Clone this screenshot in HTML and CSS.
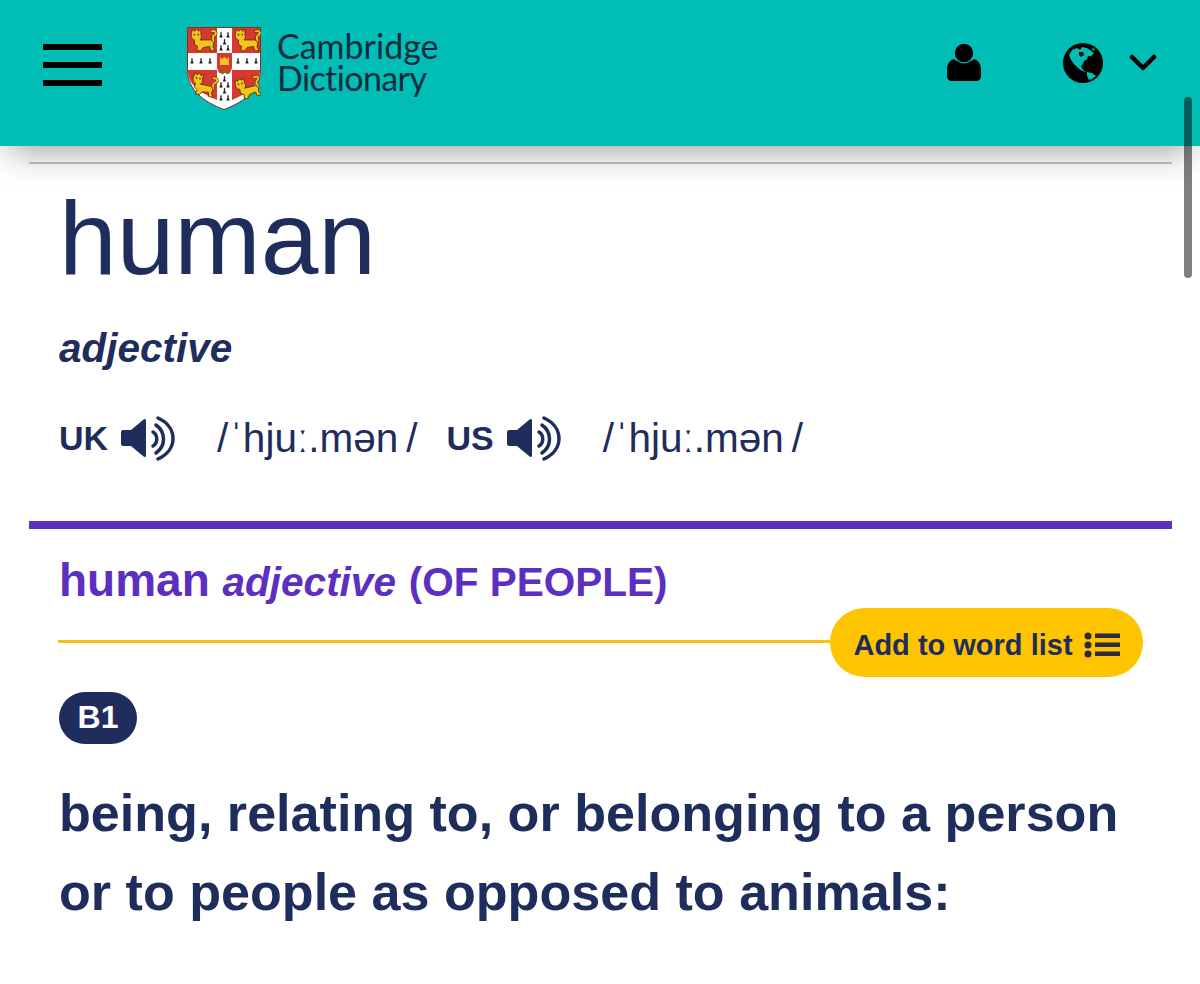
FILE: index.html
```html
<!DOCTYPE html>
<html lang="en">
<head>
  <meta charset="UTF-8">
  <title>human | Cambridge Dictionary</title>
  <link rel="stylesheet" href="styles.css">
</head>
<body>

<header class="topbar">
  <div class="hamburger"><span></span><span></span><span></span></div>

  <div class="logo">
    <svg class="shield" viewBox="0 0 74 83" width="74" height="83">
      <defs>
        <g id="lion">
          <path d="M22 4C26 3 27 6 24 8C21 10 25 12 23 15" fill="none" stroke="#5a3208" stroke-width="3" stroke-linecap="round"/>
          <path d="M22 4C26 3 27 6 24 8C21 10 25 12 23 15" fill="none" stroke="#f4c41c" stroke-width="1.800" stroke-linecap="round"/>
          <path d="M3 7L4 2L6 4L8 2L10 4L12 2L12 7C13 10 12 11 11 12L21 12C24 13 24 16 23 18L25 22L21 22L20 18L14 19L12 22L8 22L9 18L6 16L6 12C3 11 3 9 3 7Z" fill="#f4c41c" stroke="#5a3208" stroke-width=".8" stroke-linejoin="round"/>
          <circle cx="6" cy="7" r=".8" fill="#5a3208"/>
          <circle cx="9.500" cy="7" r=".8" fill="#5a3208"/>
        </g>
        <path id="erm" d="M0 -3.600L.9 -1.400L.4 -1L1.700 2.400H-1.700L-.4 -1L-.9 -1.400Z" fill="#22221f"/>
      </defs>
      <path d="M.5 .5H73.500V43C73.500 63 57 75 37 82.500C17 75 .5 63 .5 43Z" fill="#fff" stroke="#8f2a24" stroke-width="1"/>
      <path d="M1 1H30V26H1Z" fill="#d8392f"/>
      <path d="M45 1H73V26H45Z" fill="#d8392f"/>
      <path d="M1 43H30V73C14 66 1 59 1 43Z" fill="#d8392f"/>
      <path d="M45 43H73C73 59 60 66 45 73Z" fill="#d8392f"/>
      <use href="#lion" transform="translate(1 0) scale(1.080)"/>
      <use href="#lion" transform="translate(45 0) scale(1.080)"/>
      <use href="#lion" transform="translate(2 45) rotate(12 14 12) scale(1.050)"/>
      <use href="#lion" transform="translate(46 48) rotate(-14 14 12) scale(1.050)"/>
      <path d="M30 26H45V41L43 46H32L30 41Z" fill="#d8392f"/>
      <path d="M33 30L35 32L37.500 30L40 32L42 30V38H33Z" fill="#f4c41c"/>
      <path d="M34 42H37V47H34ZM39 42H42V47H39Z" fill="#8a6a1a"/>
      <use href="#erm" x="34" y="8"/><use href="#erm" x="41" y="8"/>
      <use href="#erm" x="37.500" y="15"/>
      <use href="#erm" x="34" y="21"/><use href="#erm" x="41" y="21"/>
      <use href="#erm" x="37.500" y="52"/>
      <use href="#erm" x="34" y="58"/><use href="#erm" x="41" y="58"/>
      <use href="#erm" x="37.500" y="64"/>
      <use href="#erm" x="34" y="71"/><use href="#erm" x="41" y="71"/>
      <use href="#erm" x="5" y="34"/><use href="#erm" x="14" y="34"/><use href="#erm" x="23" y="34"/>
      <use href="#erm" x="51" y="34"/><use href="#erm" x="60" y="34"/><use href="#erm" x="69" y="34"/>
    </svg>
    <div class="logo-text">Cambridge<br><span class="logo-second">Dictionary</span></div>
  </div>

  <div class="topbar-right">
    <svg class="user-icon" viewBox="0 0 34 38" width="34" height="38">
      <path d="M7 16C10 20 24 20 27 16C31 17 34 21 34 26V33C34 36 32 38 29 38H5C2 38 0 36 0 33V26C0 21 3 17 7 16Z" fill="#000"/>
      <circle cx="17" cy="10" r="9.800" fill="#000" stroke="#00bdb6" stroke-width="1.200"/>
    </svg>
    <svg class="globe-icon" viewBox="0 0 40 40" width="40" height="40">
      <circle cx="20" cy="20" r="20" fill="#000"/>
      <path d="M6 12L9 7L14 5L17 7L19 4L24 5L27 7L31 10L28 13L25 13L24 16L21 18L20 21L18 23L20 27L23 29L19 28L15 25L11 21L8 17Z" fill="#00bdb6"/>
      <path d="M24 29L29 30L33 33L29 36L26 37L24 33Z" fill="#00bdb6"/>
      <path d="M16 9L20 9L21 12L18 14L16 12Z" fill="#000"/>
      <path d="M29 5L32 6L30 8Z" fill="#00bdb6"/>
    </svg>
    <svg class="chevron" viewBox="0 0 28 18" width="28" height="18">
      <path d="M3 3L14 14L25 3" fill="none" stroke="#000" stroke-width="4.500" stroke-linecap="round" stroke-linejoin="round"/>
    </svg>
  </div>
</header>

<div class="scrollbar"></div>

<main class="page">
  <div class="top-rule"></div>

  <h1 class="headword">human</h1>
  <div class="pos">adjective</div>

  <div class="pron-row">
    <span class="region">UK</span>
    <svg class="speaker" viewBox="0 0 56 46" width="56" height="46">
      <path d="M1 17C1 16 2 15 3 15H11L23 5C25 3 26 4 26 6V40C26 42 25 43 23 41L11 31H3C2 31 1 30 1 29Z" fill="#1f2d5c"/>
      <g fill="none" stroke="#1f2d5c" stroke-width="3.500" stroke-linecap="round">
        <path d="M33 17C38 20 38 28 33 31"/>
        <path d="M36 10C46 17 46 31 36 38"/>
        <path d="M38 3C58 12 58 35 38 44"/>
      </g>
    </svg>
    <span class="ipa"><span>/</span>ˈhjuː.mən<span class="slash-end">/</span></span>
    <span class="region region-us">US</span>
    <svg class="speaker" viewBox="0 0 56 46" width="56" height="46">
      <path d="M1 17C1 16 2 15 3 15H11L23 5C25 3 26 4 26 6V40C26 42 25 43 23 41L11 31H3C2 31 1 30 1 29Z" fill="#1f2d5c"/>
      <g fill="none" stroke="#1f2d5c" stroke-width="3.500" stroke-linecap="round">
        <path d="M33 17C38 20 38 28 33 31"/>
        <path d="M36 10C46 17 46 31 36 38"/>
        <path d="M38 3C58 12 58 35 38 44"/>
      </g>
    </svg>
    <span class="ipa"><span>/</span>ˈhjuː.mən<span class="slash-end">/</span></span>
  </div>

  <section class="sense">
    <h2 class="sense-title">human <em>adjective</em> <span class="guide">(OF PEOPLE)</span></h2>

    <div class="wordlist-row">
      <div class="yellow-line"></div>
      <div class="wordlist-btn">
        Add to word list
        <svg viewBox="0 0 36 26" width="36" height="26">
          <g fill="#2b2b3a">
            <circle cx="4" cy="4" r="3.500"/><circle cx="4" cy="13" r="3.500"/><circle cx="4" cy="22" r="3.500"/>
            <rect x="11" y="1.500" width="25" height="4.500"/><rect x="11" y="10.500" width="25" height="4.500"/><rect x="11" y="19.500" width="25" height="4.500"/>
          </g>
        </svg>
      </div>
    </div>

    <span class="level">B1</span>
    <p class="definition">being, relating to, or belonging to a person or to people as opposed to animals:</p>
  </section>
</main>

</body>
</html>
```

FILE: styles.css
```css
html, body {
  height: 100%;
}

body {
  margin: 0;
  background-color: #fff;
  color: #1f2d5c;
  font-family: "Liberation Sans", Arial, sans-serif;
  overflow: hidden;
  position: relative;
}

.topbar {
  height: 146px;
  background-color: #00bdb6;
  box-shadow: 0 12px 34px -8px rgba(0, 0, 0, 0.4);
  display: flex;
  align-items: flex-start;
  padding: 0 43px 0 43px;
  position: relative;
}

.hamburger {
  width: 59px;
  margin-top: 44px;
  display: flex;
  flex-direction: column;
  gap: 12px;
}

.hamburger span {
  display: block;
  height: 6px;
  background-color: #000;
}

.logo {
  display: flex;
  align-items: flex-start;
  margin: 27px 0 0 85px;
}

.logo-text {
  margin: 3px 0 0 16px;
  font-family: Lato, sans-serif;
  font-variant-ligatures: none;
  font-size: 34px;
  line-height: 32px;
  color: #0f2c3f;
}

.logo-second {
  letter-spacing: -0.6px;
}

.topbar-right {
  margin-left: auto;
  display: flex;
  align-items: flex-start;
}

.user-icon {
  margin-top: 43px;
}

.globe-icon {
  margin: 43px 0 0 82px;
}

.chevron {
  margin: 54px 0 0 26px;
}

.scrollbar {
  position: absolute;
  left: 1184px;
  top: 97px;
  width: 8px;
  height: 181px;
  border-radius: 4px;
  background-color: rgba(0, 0, 0, 0.5);
}

.page {
  padding: 16px 28px 0 29px;
}

.top-rule {
  height: 2px;
  background-color: #c4c4c4;
}

.headword {
  margin: 15px 0 0 30px;
  font-size: 103.700px;
  font-weight: normal;
  line-height: 118px;
}

.pos {
  margin: 29px 0 0 30px;
  font-size: 40.500px;
  font-weight: bold;
  font-style: italic;
  line-height: 44px;
}

.pron-row {
  margin: 43px 0 0 30px;
  display: flex;
  align-items: center;
  height: 50px;
}

.region {
  font-size: 34px;
  font-weight: bold;
}

.speaker {
  margin-left: 12px;
}

.ipa {
  margin-left: 41px;
  font-size: 40.500px;
  display: flex;
  gap: 1px;
}

.slash-end {
  margin-left: 7px;
}

.region-us {
  margin-left: 29px;
}

.sense {
  margin-top: 58px;
  border-top: 8px solid #5d2fc1;
}

.sense-title {
  margin: 26px 0 0 30px;
  color: #5d2fc1;
  font-size: 46px;
  line-height: 51px;
  font-weight: bold;
}

.sense-title em {
  font-size: 40.500px;
}

.guide {
  font-size: 40.500px;
}

.wordlist-row {
  margin: 0 29px 0 29px;
  display: flex;
  align-items: center;
}

.yellow-line {
  flex: 1;
  height: 3px;
  margin-bottom: 2px;
  background-color: #f7c30f;
}

.wordlist-btn {
  height: 69px;
  width: 313px;
  box-sizing: border-box;
  padding-top: 5px;
  border-radius: 35px;
  background-color: #ffc400;
  display: flex;
  align-items: center;
  justify-content: center;
  gap: 11px;
  font-size: 29px;
  font-weight: bold;
}

.level {
  display: inline-block;
  margin: 15px 0 0 30px;
  width: 78px;
  height: 52px;
  line-height: 50px;
  border-radius: 26px;
  background-color: #1f2d5c;
  color: #fff;
  text-align: center;
  font-size: 32px;
  font-weight: bold;
}

.definition {
  margin: 30px 29px 0 30px;
  font-size: 52.100px;
  line-height: 79px;
  font-weight: bold;
}
```
